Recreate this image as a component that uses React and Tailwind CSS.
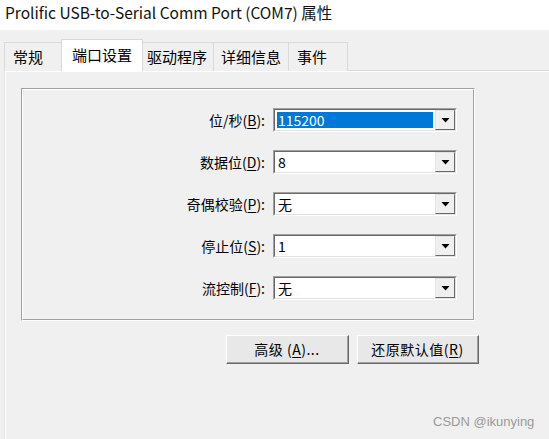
import React from 'react';

const cjk = { fontFamily: '"Noto Sans CJK SC", "Noto Sans", sans-serif' };

const tabs = [
    { name: '常规', w: 'w-[58px]', pl: 'pl-[8px]' },
    { name: '端口设置', w: 'w-[82px]', pl: 'pl-[10px]' },
    { name: '驱动程序', w: 'w-[72px]', pl: 'pl-[5px]' },
    { name: '详细信息', w: 'w-[75px]', pl: 'pl-[7px]' },
    { name: '事件', w: 'w-[59px]', pl: 'pl-[8px]' },
];

const rows = [
    { label: '位/秒', key: 'B', value: '115200', selected: true },
    { label: '数据位', key: 'D', value: '8' },
    { label: '奇偶校验', key: 'P', value: '无' },
    { label: '停止位', key: 'S', value: '1' },
    { label: '流控制', key: 'F', value: '无' },
];

const Combo = ({ value, selected }) => (
    <div className="w-[184px] h-[24px] border-t border-l border-t-[#a0a0a0] border-l-[#a0a0a0] border-b border-r border-b-white border-r-white">
        <div className="h-full flex border-t border-l border-t-[#696969] border-l-[#696969] border-b border-r border-b-[#e3e3e3] border-r-[#e3e3e3] bg-white">
            <div className="flex-1 p-[2px]">
                <div className={`h-full flex items-center pl-[1px] text-[14px] leading-none ${selected ? 'bg-[#0078d7] text-white' : 'text-black'}`}>
                    {value}
                </div>
            </div>
            <div className="w-[20px] h-[20px] bg-[#f0f0f0] border-t border-l border-t-[#e3e3e3] border-l-[#e3e3e3] border-b border-r border-b-[#696969] border-r-[#696969] flex items-center justify-center">
                <svg width="9" height="5" viewBox="0 0 9 5"><path d="M0.5 0h8L4.5 4.5z" fill="#000" /></svg>
            </div>
        </div>
    </div>
);

const Btn = ({ children, w }) => (
    <div className={`${w} h-[29px] bg-[#e8e8e8] border-t border-l border-t-white border-l-white border-b border-r border-b-[#696969] border-r-[#696969]`}>
        <div className="h-full flex items-center justify-center border-b border-r border-b-[#a0a0a0] border-r-[#a0a0a0] text-[14px] text-black tracking-[0.5px]">
            {children}
        </div>
    </div>
);

const App = () => {
    return (
        <div className="relative w-[549px] h-[439px] overflow-hidden bg-[#f0f0f0]" style={cjk}>
            <div className="h-[30px] bg-white flex items-center pl-[5px] pb-[4px]">
                <span className="text-[15.5px] text-[#111]">Prolific USB-to-Serial Comm Port (COM7) 属性</span>
            </div>

            <div className="flex items-end pl-[4px] h-[41px] -mb-px">
                {tabs.map((t, i) =>
                    i === 1 ? (
                        <div key={t.name} className={`relative z-10 h-[32px] -mx-[1px] ${t.w} ${t.pl} bg-white border border-b-0 border-[#d9d9d9] flex items-center text-[15px] text-black`}>
                            {t.name}
                        </div>
                    ) : (
                        <div key={t.name} className={`h-[29px] ${t.w} ${t.pl} bg-[#f0f0f0] border border-b-0 border-[#dadada] flex items-center text-[15px] text-black ${i > 1 ? 'border-l-0' : ''}`}>
                            {t.name}
                        </div>
                    )
                )}
            </div>

            <div className="ml-[4px] h-[369px] border-t border-l border-t-[#d9d9d9] border-l-[#e3e3e3] bg-[#f0f0f0]">
                <div className="h-full border-t border-l border-white pl-[15px] pt-[16px]">
                    <div className="w-[454px] h-[233px] border-t border-l border-[#a0a0a0] border-b border-r border-b-white border-r-white">
                        <div className="h-full border-t border-l border-white border-b border-r border-b-[#a0a0a0] border-r-[#a0a0a0] flex flex-col gap-[18px] pt-[18px] pr-[16px]">
                            {rows.map(r => (
                                <div key={r.key} className="flex items-center justify-end gap-[8px]">
                                    <span className="text-[14px] text-black">
                                        {r.label}(<span className="underline underline-offset-2">{r.key}</span>):
                                    </span>
                                    <Combo value={r.value} selected={r.selected} />
                                </div>
                            ))}
                        </div>
                    </div>
                    <div className="w-[458px] flex justify-end gap-[8px] mt-[14px]">
                        <Btn w="w-[123px]">高级 (<span className="underline underline-offset-2">A</span>)...</Btn>
                        <Btn w="w-[122px]">还原默认值(<span className="underline underline-offset-2">R</span>)</Btn>
                    </div>
                </div>
            </div>

            <div className="absolute left-[433px] top-[412px] text-[13px] text-[#9a9a9a]" style={{ fontFamily: '"Liberation Sans", Arial, sans-serif' }}>
                CSDN @ikunying
            </div>
        </div>
    );
};

export default App;
